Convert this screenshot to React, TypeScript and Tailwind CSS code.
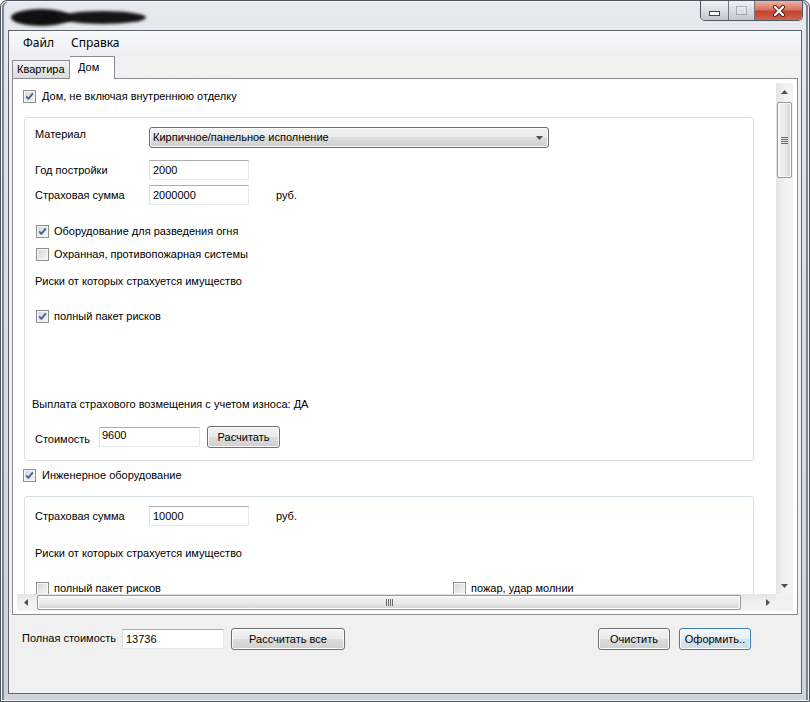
import React from "react";

const Check = ({ on }: { on?: boolean }) => (
  <span className="w-[13px] h-[13px] shrink-0 border border-[#8e8f8f] bg-linear-to-br from-[#d3d6d9] to-[#f7f7f7] shadow-[inset_0_0_0_1px_#f6f6f6] flex items-center justify-center">
    {on && (
      <svg width="11" height="11" viewBox="0 0 11 11">
        <path d="M2.2 5.4 L4.4 7.9 L8.8 2.4" fill="none" stroke="#44619c" strokeWidth="1.8" strokeLinejoin="round" />
      </svg>
    )}
  </span>
);

const Field = ({ value, className = "" }: { value: string; className?: string }) => (
  <div className={"h-[20px] shrink-0 bg-white border border-[#e3e9ef] border-t-[#abadb3] border-l-[#dbdfe6] pl-[3px] flex items-center leading-[14px] " + className}>
    {value}
  </div>
);

const Btn = ({ label, className = "", def }: { label: string; className?: string; def?: boolean }) => (
  <div
    className={
      "h-[22px] shrink-0 rounded-[3px] border flex items-center justify-center shadow-[inset_0_0_0_1px_#fbfbfb] " +
      (def
        ? "border-[#3c7fb1] bg-[linear-gradient(#f4f8fb,#e6eef4_50%,#d8e5ee_50%,#cddde9)] "
        : "border-[#707070] bg-[linear-gradient(#f2f2f2,#ebebeb_50%,#dddddd_50%,#cfcfcf)] ") +
      className
    }
  >
    {label}
  </div>
);

const Row = ({ on, text, className = "" }: { on?: boolean; text: string; className?: string }) => (
  <div className={"flex items-center h-[14px] gap-[5px] " + className}>
    <Check on={on} />
    <span>{text}</span>
  </div>
);

const Arrow = ({ dir }: { dir: "up" | "down" | "left" | "right" }) => {
  const pts = {
    up: "0,4 7,4 3.5,0",
    down: "0,0 7,0 3.5,4",
    left: "4,0 4,7 0,3.5",
    right: "0,0 0,7 4,3.5",
  }[dir];
  const v = dir === "up" || dir === "down";
  return (
    <svg width={v ? 7 : 4} height={v ? 4 : 7} viewBox={v ? "0 0 7 4" : "0 0 4 7"}>
      <polygon points={pts} fill="#505050" />
    </svg>
  );
};

export default function App() {
  return (
    <div className="w-[810px] h-[702px] bg-white font-['Liberation_Sans',Arial,sans-serif] text-[11px] text-black">
      <div className="w-[810px] h-[702px] rounded-t-[7px] border border-[#4d5660] bg-linear-to-b from-[#e6e9ed] via-[#d9dee4] to-[#cdd4dc] shadow-[inset_0_0_0_1px_#f2f4f6,inset_2px_0_0_1px_#7c8590,inset_-2px_0_0_1px_#7c8590] px-[7px] pb-[7px] flex flex-col">
        {/* title bar */}
        <div className="h-[29px] flex items-start shrink-0">
          <div className="ml-[3px] mt-[8px] flex items-center">
            <div className="w-[60px] h-[17px] bg-[#101010] rounded-[50%] blur-[1.5px]" />
            <div className="-ml-[12px] w-[87px] h-[13px] bg-[#151515] rounded-[50%] blur-[1.5px]" />
          </div>
          <div className="ml-auto -mr-px flex h-[20px] rounded-b-[5px] border border-t-0 border-[#4e5864] overflow-hidden">
            <div className="w-[28px] bg-linear-to-b from-[#eef1f4] via-[#d9dfe5] to-[#bfc7d0] border-r border-[#6b7580] flex items-center justify-center">
              <svg width="11" height="5" viewBox="0 0 11 5" className="mt-[5px]">
                <rect x="0.5" y="0.5" width="10" height="4" fill="#fff" stroke="#3d4550" />
              </svg>
            </div>
            <div className="w-[26px] bg-linear-to-b from-[#eef1f4] via-[#d9dfe5] to-[#bfc7d0] border-r border-[#6b7580] flex items-center justify-center">
              <svg width="11" height="9" viewBox="0 0 11 9" opacity="0.45">
                <rect x="0.5" y="0.5" width="10" height="8" fill="none" stroke="#6b7380" />
                <rect x="2" y="2" width="7" height="5" fill="none" stroke="#ffffff" />
              </svg>
            </div>
            <div className="w-[47px] bg-[linear-gradient(#eab5a9,#d9735f_45%,#c5412b_55%,#d0654e)] flex items-center justify-center">
              <svg width="14" height="12" viewBox="0 0 14 12">
                <path d="M3 2 L11 10 M11 2 L3 10" stroke="#4a1d16" strokeWidth="4" strokeLinecap="round" />
                <path d="M3 2 L11 10 M11 2 L3 10" stroke="#ffffff" strokeWidth="2.2" strokeLinecap="round" />
              </svg>
            </div>
          </div>
        </div>

        {/* client */}
        <div className="flex-1 min-h-0 flex flex-col border border-[#5c6671] bg-[#f0f0f0]">
          <div className="h-[23px] shrink-0 flex items-center pl-[14px] bg-linear-to-b from-[#f8f9fa] to-[#eef0f2] font-['Noto_Sans',sans-serif] text-[12px]">
            <span className="w-[48px]">Файл</span>
            <span>Справка</span>
          </div>

          <div className="mx-[3px] mt-[2px] flex flex-col shrink-0">
            <div className="flex items-end h-[22px] relative z-10">
              <div className="h-[18px] w-[58px] border border-b-0 border-[#898c95] bg-linear-to-b from-[#f3f3f3] to-[#dcdcdc] pl-[4px] flex items-center">
                Квартира
              </div>
              <div className="h-[23px] -mb-px w-[45px] border border-b-0 border-l-0 border-[#898c95] bg-white pl-[8px] pt-[3px] leading-[14px]">
                Дом
              </div>
            </div>
            <div className="h-[537px] border border-[#898c95] bg-white p-[4px] pb-[3px] flex flex-col">
              <div className="flex flex-1 min-h-0">
                <div className="flex-1 overflow-hidden">
                  <div className="flex flex-col">
                    <div className="mt-[6px] ml-[6px] flex items-center h-[14px] gap-[6px]">
                      <Check on />
                      <span>Дом, не включая внутреннюю отделку</span>
                    </div>

                    <div className="mt-[14px] ml-[7px] w-[730px] h-[344px] shrink-0 rounded-[3px] border border-[#d5dfe5] pl-[10px] flex flex-col">
                      <div className="mt-[9px] flex items-start">
                        <span className="w-[114px] leading-[14px]">Материал</span>
                        <div className="w-[400px] h-[21px] rounded-[3px] border border-[#707070] bg-[linear-gradient(#f2f2f2,#ebebeb_50%,#dddddd_50%,#cfcfcf)] shadow-[inset_0_0_0_1px_#fbfbfb] pl-[3px] pr-[5px] flex items-center justify-between">
                          <span>Кирпичное/панельное исполнение</span>
                          <Arrow dir="down" />
                        </div>
                      </div>
                      <div className="mt-[12px] flex items-center">
                        <span className="w-[114px]">Год постройки</span>
                        <Field value="2000" className="w-[100px]" />
                      </div>
                      <div className="mt-[5px] flex items-center">
                        <span className="w-[114px]">Страховая сумма</span>
                        <Field value="2000000" className="w-[100px]" />
                        <span className="ml-[27px]">руб.</span>
                      </div>
                      <Row on text="Оборудование для разведения огня" className="mt-[19px] ml-[1px]" />
                      <Row text="Охранная, противопожарная системы" className="mt-[9px] ml-[1px]" />
                      <div className="mt-[13px] leading-[14px]">Риски от которых страхуется имущество</div>
                      <Row on text="полный пакет рисков" className="mt-[21px] ml-[1px]" />
                      <div className="mt-[74px] -ml-[3px] leading-[14px]">Выплата страхового возмещения с учетом износа: ДА</div>
                      <div className="mt-[15px] flex items-start">
                        <span className="w-[64px] mt-[6px] leading-[14px]">Стоимость</span>
                        <div className="mt-px w-[101px] h-[20px] bg-white border border-[#e3e9ef] border-t-[#abadb3] border-l-[#dbdfe6] pl-[2px] leading-[14px]">
                          9600
                        </div>
                        <Btn label="Расчитать" className="ml-[7px] w-[73px]" />
                      </div>
                    </div>

                    <div className="mt-[7px] ml-[6px] flex items-center h-[14px] gap-[6px]">
                      <Check on />
                      <span>Инженерное оборудование</span>
                    </div>

                    <div className="mt-[14px] ml-[7px] w-[730px] h-[200px] shrink-0 rounded-[3px] border border-[#d5dfe5] pl-[10px] flex flex-col">
                      <div className="mt-[9px] flex items-center">
                        <span className="w-[114px]">Страховая сумма</span>
                        <Field value="10000" className="w-[100px]" />
                        <span className="ml-[27px]">руб.</span>
                      </div>
                      <div className="mt-[20px] leading-[14px]">Риски от которых страхуется имущество</div>
                      <div className="mt-[21px] flex">
                        <Row text="полный пакет рисков" className="w-[417px] ml-[1px]" />
                        <Row text="пожар, удар молнии" />
                      </div>
                    </div>
                  </div>
                </div>

                {/* vertical scrollbar */}
                <div className="w-[17px] shrink-0 flex flex-col bg-linear-to-r from-[#e4e4e4] via-[#f1f1f1] to-[#f3f3f3]">
                  <div className="h-[17px] flex items-center justify-center">
                    <Arrow dir="up" />
                  </div>
                  <div className="mt-[2px] mx-px h-[76px] rounded-[2px] border border-[#979797] bg-linear-to-r from-[#f5f5f5] via-[#e9e9e9] to-[#d3d3d3] shadow-[inset_0_0_0_1px_#ffffff] flex flex-col items-center justify-center gap-px">
                    <div className="w-[7px] h-px bg-[#6a6a6a]" />
                    <div className="w-[7px] h-px bg-[#6a6a6a]" />
                    <div className="w-[7px] h-px bg-[#6a6a6a]" />
                    <div className="w-[7px] h-px bg-[#6a6a6a]" />
                  </div>
                  <div className="flex-1" />
                  <div className="h-[17px] flex items-center justify-center">
                    <Arrow dir="down" />
                  </div>
                </div>
              </div>

              {/* horizontal scrollbar */}
              <div className="flex h-[17px] shrink-0">
                <div className="flex-1 flex bg-linear-to-b from-[#e4e4e4] via-[#f1f1f1] to-[#f3f3f3]">
                  <div className="w-[17px] flex items-center justify-center">
                    <Arrow dir="left" />
                  </div>
                  <div className="ml-[3px] my-px w-[704px] rounded-[2px] border border-[#979797] bg-linear-to-b from-[#f5f5f5] via-[#e9e9e9] to-[#d3d3d3] shadow-[inset_0_0_0_1px_#ffffff] flex items-center justify-center gap-px">
                    <div className="w-px h-[7px] bg-[#6a6a6a]" />
                    <div className="w-px h-[7px] bg-[#6a6a6a]" />
                    <div className="w-px h-[7px] bg-[#6a6a6a]" />
                    <div className="w-px h-[7px] bg-[#6a6a6a]" />
                  </div>
                  <div className="flex-1" />
                  <div className="w-[17px] flex items-center justify-center">
                    <Arrow dir="right" />
                  </div>
                </div>
                <div className="w-[17px] bg-[#f0f0f0]" />
              </div>
            </div>
          </div>

          {/* bottom bar */}
          <div className="mt-[13px] pl-[13px] pr-[50px] flex items-start">
            <span className="w-[100px] mt-[3px] leading-[14px]">Полная стоимость</span>
            <Field value="13736" className="mt-px w-[102px]" />
            <Btn label="Рассчитать все" className="ml-[7px] w-[114px]" />
            <div className="ml-auto flex gap-[9px]">
              <Btn label="Очистить" className="w-[72px] h-[21px]" />
              <Btn label="Оформить.." def className="w-[72px] h-[21px]" />
            </div>
          </div>
        </div>
      </div>
    </div>
  );
}
